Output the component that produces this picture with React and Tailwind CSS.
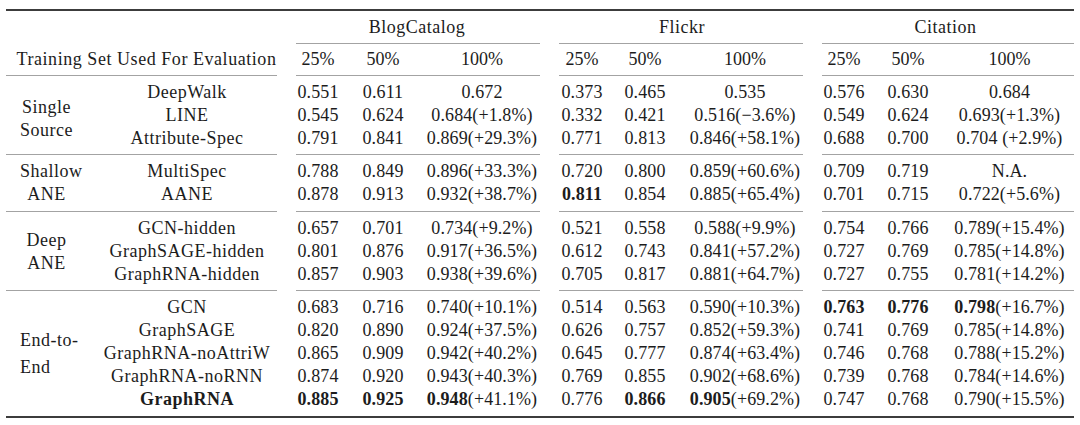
import React from "react";

const COLS = "grid grid-cols-[200px_62px_68px_130px_70px_56px_144px_54px_74px_129px]";

const groups = [
  {
    label: [
      { t: "Single", c: "self-center" },
      { t: "Source", c: "self-center" },
    ],
    off: "pt-[6px]",
    rows: [
      { m: "DeepWalk", v: ["0.551", "0.611", "0.672", "0.373", "0.465", "0.535", "0.576", "0.630", "0.684"], b: [] },
      { m: "LINE", v: ["0.545", "0.624", "0.684(+1.8%)", "0.332", "0.421", "0.516(\u22123.6%)", "0.549", "0.624", "0.693(+1.3%)"], b: [] },
      { m: "Attribute-Spec", v: ["0.791", "0.841", "0.869(+29.3%)", "0.771", "0.813", "0.846(+58.1%)", "0.688", "0.700", "0.704 (+2.9%)"], b: [] },
    ],
  },
  {
    label: [
      { t: "Shallow", c: "self-start pl-[14px]" },
      { t: "ANE", c: "self-center" },
    ],
    off: "",
    rows: [
      { m: "MultiSpec", v: ["0.788", "0.849", "0.896(+33.3%)", "0.720", "0.800", "0.859(+60.6%)", "0.709", "0.719", "N.A."], b: [] },
      { m: "AANE", v: ["0.878", "0.913", "0.932(+38.7%)", "0.811", "0.854", "0.885(+65.4%)", "0.701", "0.715", "0.722(+5.6%)"], b: [3] },
    ],
  },
  {
    label: [
      { t: "Deep", c: "self-center" },
      { t: "ANE", c: "self-center" },
    ],
    off: "",
    rows: [
      { m: "GCN-hidden", v: ["0.657", "0.701", "0.734(+9.2%)", "0.521", "0.558", "0.588(+9.9%)", "0.754", "0.766", "0.789(+15.4%)"], b: [] },
      { m: "GraphSAGE-hidden", v: ["0.801", "0.876", "0.917(+36.5%)", "0.612", "0.743", "0.841(+57.2%)", "0.727", "0.769", "0.785(+14.8%)"], b: [] },
      { m: "GraphRNA-hidden", v: ["0.857", "0.903", "0.938(+39.6%)", "0.705", "0.817", "0.881(+64.7%)", "0.727", "0.755", "0.781(+14.2%)"], b: [] },
    ],
  },
  {
    label: [
      { t: "End-to-", c: "self-start pl-[14px]" },
      { t: "End", c: "self-start pl-[14px]" },
    ],
    off: "",
    lh: "leading-[27px]",
    rows: [
      { m: "GCN", v: ["0.683", "0.716", "0.740(+10.1%)", "0.514", "0.563", "0.590(+10.3%)", "0.763", "0.776", "0.798(+16.7%)"], b: [6, 7, 8] },
      { m: "GraphSAGE", v: ["0.820", "0.890", "0.924(+37.5%)", "0.626", "0.757", "0.852(+59.3%)", "0.741", "0.769", "0.785(+14.8%)"], b: [] },
      { m: "GraphRNA-noAttriW", v: ["0.865", "0.909", "0.942(+40.2%)", "0.645", "0.777", "0.874(+63.4%)", "0.746", "0.768", "0.788(+15.2%)"], b: [] },
      { m: "GraphRNA-noRNN", v: ["0.874", "0.920", "0.943(+40.3%)", "0.769", "0.855", "0.902(+68.6%)", "0.739", "0.768", "0.784(+14.6%)"], b: [] },
      { m: "GraphRNA", bm: true, v: ["0.885", "0.925", "0.948(+41.1%)", "0.776", "0.866", "0.905(+69.2%)", "0.747", "0.768", "0.790(+15.5%)"], b: [0, 1, 2, 4, 5] },
    ],
  },
];

function Cell({ v, bold }) {
  if (!bold) return <div className="text-center whitespace-pre tracking-[0.1px]">{v}</div>;
  return (
    <div className="text-center whitespace-pre tracking-[0.1px]">
      <span className="font-bold">{v.slice(0, 5)}</span>
      {v.slice(5)}
    </div>
  );
}

function Rule({ left = true }) {
  return (
    <div className="flex h-px">
      <div className={"w-[271px] " + (left ? "bg-[#a3a3a3]" : "")} />
      <div className="w-[19px]" />
      <div className="w-[244px] bg-[#a3a3a3]" />
      <div className="w-[19px]" />
      <div className="w-[244px] bg-[#a3a3a3]" />
      <div className="w-[19px]" />
      <div className="w-[252px] bg-[#a3a3a3]" />
    </div>
  );
}

export default function App() {
  return (
    <div className="w-[1080px] h-[425px] bg-white text-[#1c1c1c] text-[18px] leading-[23px] overflow-hidden font-['Liberation_Serif','Times_New_Roman',serif]">
      <div className="ml-[6px] w-[1068px] pt-[9px]">
        <div className="h-[2px] bg-[#3c3c3c]" />
        {/* header row 1 */}
        <div className="flex h-[32px] items-center tracking-[0.5px]">
          <div className="w-[281px]" />
          <div className="w-[260px] text-center">BlogCatalog</div>
          <div className="w-[270px] text-center">Flickr</div>
          <div className="w-[257px] text-center">Citation</div>
        </div>
        <Rule left={false} />
        {/* header row 2 */}
        <div className="flex h-[31px] items-center">
          <div className="w-[281px] text-center whitespace-nowrap tracking-[0.55px]">Training Set Used For Evaluation</div>
          <div className="w-[62px] text-center">25%</div>
          <div className="w-[68px] text-center">50%</div>
          <div className="w-[130px] text-center">100%</div>
          <div className="w-[70px] text-center">25%</div>
          <div className="w-[56px] text-center">50%</div>
          <div className="w-[144px] text-center">100%</div>
          <div className="w-[54px] text-center">25%</div>
          <div className="w-[74px] text-center">50%</div>
          <div className="w-[129px] text-center">100%</div>
        </div>
        <Rule />
        {groups.map((g, gi) => (
          <React.Fragment key={gi}>
            <div className={"flex pt-[5px] " + (gi === 0 ? "pb-[4px]" : gi === 2 ? "pb-[4px]" : "pb-[5px]")}>
              <div className={"w-[81px] flex flex-col justify-center tracking-[0.5px] " + g.off + " " + (g.lh || "")}>
                {g.label.map((l, li) => (
                  <div key={li} className={l.c}>
                    {l.t}
                  </div>
                ))}
              </div>
              <div className="flex flex-col">
                {g.rows.map((r, ri) => (
                  <div key={ri} className={COLS + " h-[23px] items-center"}>
                    <div className={"text-center whitespace-nowrap tracking-[0.5px] " + (r.bm ? "font-bold" : "")}>{r.m}</div>
                    {r.v.map((v, vi) => (
                      <Cell key={vi} v={v} bold={r.b.includes(vi)} />
                    ))}
                  </div>
                ))}
              </div>
            </div>
            {gi < groups.length - 1 ? <Rule /> : <div className="h-[2px] bg-[#3c3c3c]" />}
          </React.Fragment>
        ))}
      </div>
    </div>
  );
}
